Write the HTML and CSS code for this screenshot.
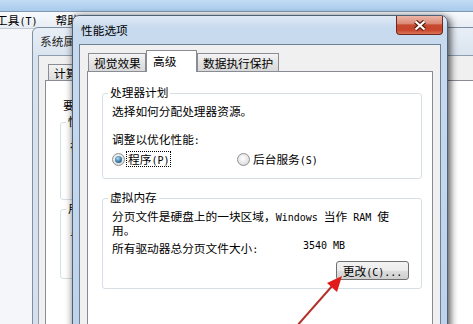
FILE: index.html
```html
<!DOCTYPE html>
<html lang="zh-CN">
<head>
    <meta charset="UTF-8">
    <meta name="viewport" content="width=device-width, initial-scale=1.0">
    <title>性能选项</title>
    <link rel="stylesheet" href="styles.css">
</head>
<body>
    <div class="desktop">
        <div class="main-win">
            <div class="main-top"></div>
            <div class="menubar">
                <span class="menu-item first">工具<span class="mn">(T)</span></span>
                <span class="menu-item">帮助</span>
            </div>
        </div>

        <div class="sys-win">
            <div class="sys-title">系统属</div>
            <div class="sys-client">
                <div class="sys-tabs">
                    <div class="sys-tab">计算</div>
                </div>
                <div class="sys-panel">
                    <p class="sys-note">要进</p>
                    <div class="sys-group g-perf">
                        <span class="sys-legend">性能</span>
                        <p>视觉</p>
                    </div>
                    <div class="sys-group g-user">
                        <span class="sys-legend">用户</span>
                        <p>与登</p>
                    </div>
                </div>
            </div>
        </div>

        <div class="perf-win">
            <div class="title-bar">
                <span class="title">性能选项</span>
                <span class="close-btn">
                    <svg width="14" height="11" viewBox="0 0 14 11">
                        <path d="M2.5 1.5 L11.5 9.5 M11.5 1.5 L2.5 9.5" stroke="#5a1c12" stroke-width="4.4" fill="none"/>
                        <path d="M2.5 1.5 L11.5 9.5 M11.5 1.5 L2.5 9.5" stroke="#fff" stroke-width="2.2" fill="none"/>
                    </svg>
                </span>
            </div>
            <div class="client">
                <div class="tabs">
                    <div class="tab tab-visual">视觉效果</div>
                    <div class="tab tab-adv active">高级</div>
                    <div class="tab tab-dep">数据执行保护</div>
                </div>
                <div class="panel">
                    <div class="group group-cpu">
                        <span class="legend">处理器计划</span>
                        <p class="cpu-text">选择如何分配处理器资源。</p>
                        <p class="cpu-adjust">调整以优化性能<span class="mn">:</span></p>
                        <div class="radio-row">
                            <label class="option opt-prog">
                                <span class="radio on"></span>
                                <span class="focus">程序<span class="mn">(P)</span></span>
                            </label>
                            <label class="option">
                                <span class="radio"></span>
                                <span class="opt-text">后台服务<span class="mn">(S)</span></span>
                            </label>
                        </div>
                    </div>
                    <div class="group group-vm">
                        <span class="legend">虚拟内存</span>
                        <p class="vm-desc">分页文件是硬盘上的一块区域，<span class="mn">Windows </span>当作<span class="mn"> RAM </span>使<br>用。</p>
                        <div class="size-row">
                            <span class="size-label">所有驱动器总分页文件大小<span class="mn">:</span></span>
                            <span class="mn">3540 MB</span>
                        </div>
                        <div class="btn-row">
                            <button class="btn">更改<span class="mn">(C)...</span></button>
                        </div>
                    </div>
                </div>
            </div>
        </div>

        <svg class="arrow" width="473" height="324" viewBox="0 0 473 324">
            <line x1="296" y1="327" x2="333" y2="285" stroke="#b3302a" stroke-width="2"/>
            <polygon points="342,276 327,283 337,292" fill="#e01c1a"/>
        </svg>
    </div>
</body>
</html>
```

FILE: styles.css
```css
* {
    box-sizing: border-box;
}
html, body {
    margin: 0;
    padding: 0;
}
body {
    width: 473px;
    height: 324px;
    overflow: hidden;
    font-family: "Noto Sans CJK SC", sans-serif;
    font-size: 11.7px;
    color: #000;
    background: #f4f6f9;
}
p {
    margin: 0;
}
.desktop {
    position: relative;
    width: 473px;
    height: 324px;
    overflow: hidden;
}
.mn {
    font-family: "DejaVu Sans Mono", monospace;
    font-size: 10px;
    line-height: 1;
}

/* main window behind everything */
.main-win {
    position: absolute;
    left: 0;
    top: 0;
    width: 473px;
    height: 324px;
    background: #f4f6f9;
}
.main-top {
    height: 12px;
    background: linear-gradient(#c3dcf4, #a8caeb);
    border-bottom: 1px solid #8298b0;
}
.menubar {
    display: flex;
    gap: 18px;
    height: 17px;
    line-height: 16px;
    background: linear-gradient(#f8fafc, #e7ecf3);
    border-bottom: 1px solid #c3cad4;
}
.menu-item.first {
    margin-left: -4px;
}

/* system properties dialog */
.sys-win {
    position: absolute;
    left: 32px;
    top: 27px;
    width: 470px;
    height: 320px;
    border: 1px solid #7f8fa3;
    border-radius: 6px 6px 0 0;
    background: linear-gradient(#e8eef6, #d9e3ee 30px, #d5e0ec);
}
.sys-title {
    height: 27px;
    line-height: 25px;
    padding-left: 7px;
    color: #1e1e1e;
}
.sys-client {
    margin: 0 5px;
    height: 300px;
    border: 1px solid #8d9db0;
    background: #f0f0f0;
}
.sys-tabs {
    display: flex;
    align-items: flex-end;
    height: 24px;
}
.sys-tab {
    margin-left: 9px;
    width: 60px;
    height: 16px;
    padding: 0 5px;
    line-height: 15px;
    border: 1px solid #898c95;
    border-bottom: none;
    background: linear-gradient(#f3f3f3, #dcdcdc);
}
.sys-panel {
    margin: 0 6px;
    height: 260px;
    border: 1px solid #898c95;
    background: #fff;
}
.sys-note {
    margin: 17px 0 0 17px;
    line-height: 14px;
}
.sys-group {
    position: relative;
    margin: 10px 0 0 14px;
    width: 360px;
    height: 78px;
    border: 1px solid #d5dfe5;
    border-radius: 3px;
}
.sys-group p {
    padding: 14px 0 0 9px;
}
.sys-legend {
    position: absolute;
    top: -9px;
    left: 5px;
    padding: 0 2px;
    line-height: 14px;
    background: #fff;
}
.g-user {
    margin-top: 9px;
    height: 70px;
}

/* performance options dialog */
.perf-win {
    position: absolute;
    left: 72px;
    top: 15px;
    width: 376px;
    height: 330px;
    border: 1px solid #4f6178;
    border-radius: 7px 7px 0 0;
    background: linear-gradient(#dfe9f5, #c8daee 12px, #bdd3eb);
    box-shadow: 3px 2px 7px rgba(0, 0, 0, 0.6), -2px 0 6px rgba(0, 0, 0, 0.2);
}
.title-bar {
    display: flex;
    align-items: flex-start;
    height: 28px;
}
.title {
    line-height: 28px;
    padding-left: 8px;
}
.close-btn {
    display: flex;
    align-items: center;
    justify-content: center;
    margin-left: auto;
    margin-right: 4px;
    width: 47px;
    height: 19px;
    border: 1px solid #6a2a20;
    border-top: none;
    border-radius: 0 0 4px 4px;
    background: linear-gradient(#ecb6aa, #dc8a77 42%, #c64a30 50%, #c8462c 78%, #dc7458);
}
.client {
    margin: 0 6px;
    height: 300px;
    border: 1px solid #6c7f96;
    background: #f0f0f0;
}
.tabs {
    display: flex;
    align-items: flex-end;
    height: 26px;
    padding-left: 7px;
}
.tab {
    height: 18px;
    line-height: 17px;
    padding-left: 5px;
    border: 1px solid #898c95;
    border-bottom: none;
    background: linear-gradient(#f4f4f4, #e4e4e4 50%, #d9d9d9);
    white-space: nowrap;
}
.tab-visual {
    margin-left: 1px;
    width: 58px;
}
.tab.active {
    position: relative;
    z-index: 1;
    width: 51px;
    height: 22px;
    margin-bottom: -1px;
    padding: 1px 0 0 6px;
    background: #fff;
}
.tab-dep {
    width: 82px;
}
.panel {
    margin: 0 7px;
    height: 270px;
    padding-top: 21px;
    border: 1px solid #898c95;
    background: #fff;
}
.group {
    position: relative;
    margin-left: 14px;
    width: 320px;
    padding-left: 9px;
    border: 1px solid #d5dfe5;
    border-radius: 3px;
}
.legend {
    position: absolute;
    top: -9px;
    left: 5px;
    padding: 0 2px;
    line-height: 14px;
    background: #fff;
}
.group-cpu {
    height: 86px;
    padding-top: 10px;
}
.cpu-text, .cpu-adjust {
    line-height: 14px;
}
.cpu-adjust {
    margin-top: 14px;
}
.radio-row {
    display: flex;
    margin-top: 5px;
    height: 16px;
}
.option {
    display: flex;
    align-items: center;
}
.opt-prog {
    width: 125px;
}
.radio {
    position: relative;
    width: 13px;
    height: 13px;
    margin-right: 1px;
    border: 1px solid #8e8f8f;
    border-radius: 50%;
    background: radial-gradient(circle at 45% 40%, #ffffff, #e6e6e6 55%, #cfcfcf);
}
.radio.on::after {
    content: "";
    position: absolute;
    left: 2px;
    top: 2px;
    width: 7px;
    height: 7px;
    border-radius: 50%;
    background: radial-gradient(circle at 40% 35%, #b6dcf2, #3b78a6 55%, #1d4f78);
}
.focus {
    height: 16px;
    line-height: 14px;
    padding: 0 1px;
    border: 1px dotted #000;
}
.opt-text {
    padding-left: 2px;
    line-height: 16px;
}
.group-vm {
    margin-top: 19px;
    height: 91px;
    padding-top: 10px;
}
.vm-desc {
    line-height: 13px;
}
.size-row {
    display: flex;
    margin-top: 5px;
    line-height: 14px;
}
.size-label {
    width: 191px;
}
.btn-row {
    display: flex;
    justify-content: flex-end;
    margin-top: 6px;
    padding-right: 12px;
}
.btn {
    width: 73px;
    height: 19px;
    padding: 0;
    font: inherit;
    line-height: 16px;
    color: #000;
    border: 1px solid #707070;
    border-radius: 3px;
    background: linear-gradient(#f3f3f3, #ebebeb 50%, #dddddd 51%, #cfcfcf);
}

.arrow {
    position: absolute;
    left: 0;
    top: 0;
    z-index: 5;
    pointer-events: none;
}
```
